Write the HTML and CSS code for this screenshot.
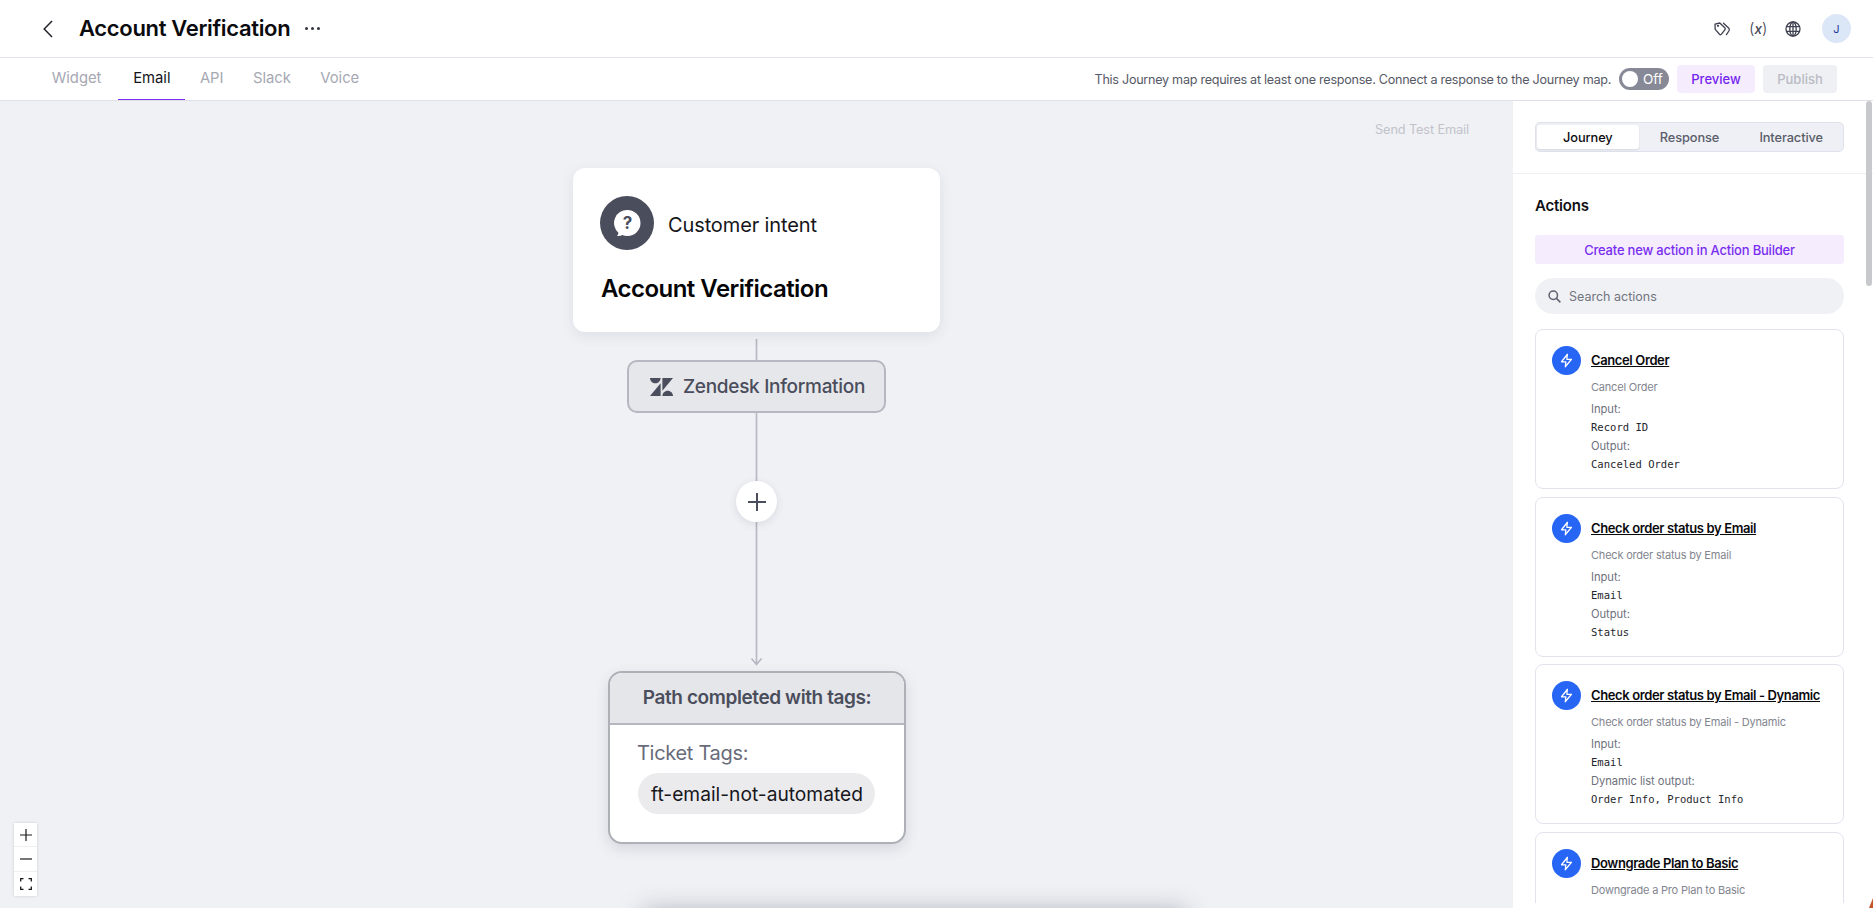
FILE: index.html
```html
<!DOCTYPE html>
<html lang="en">
<head>
<meta charset="utf-8">
<title>Account Verification</title>
<link rel="stylesheet" href="styles.css">
</head>
<body>
<div class="app">
  <header class="topbar">
    <button class="back" aria-label="Back"><svg width="10" height="18" viewBox="0 0 10 18"><path d="M9 1 1.2 9 9 17" fill="none" stroke="#22242c" stroke-width="1.5"/></svg></button>
    <h1 class="title">Account Verification</h1>
    <span class="dots"><i></i><i></i><i></i></span>
    <div class="top-icons">
      <svg class="tag-icon" width="17" height="14" viewBox="0 0 17 14" fill="none" stroke="#3f4250" stroke-width="1.3" stroke-linejoin="round" stroke-linecap="round"><path d="M1 2.200 5.800 1l5 4.800c.6.600.6 1.400 0 2l-3.300 4.400c-.6.700-1.400.7-2 .1L1.200 7.400Z"/><path d="M9.500 1.200 14.600 6c1 1 1 2 .3 3l-2.500 3.600"/><circle cx="4" cy="3.800" r=".5"/></svg>
      <span class="var-icon">(<em>x</em>)</span>
      <svg class="globe-icon" width="16" height="16" viewBox="0 0 16 16" fill="none" stroke="#3f4250" stroke-width="1.3"><circle cx="8" cy="8" r="7"/><ellipse cx="8" cy="8" rx="3.2" ry="7"/><path d="M1.400 5.600h13.200M1.400 10.400h13.200M8 1v14"/></svg>
      <span class="avatar">J</span>
    </div>
  </header>

  <nav class="tabbar">
    <div class="tabs">
      <a class="tab">Widget</a>
      <a class="tab active">Email</a>
      <a class="tab">API</a>
      <a class="tab">Slack</a>
      <a class="tab">Voice</a>
    </div>
    <div class="tab-actions">
      <span class="notice">This Journey map requires at least one response. Connect a response to the Journey map.</span>
      <span class="toggle"><i></i>Off</span>
      <button class="btn btn-preview">Preview</button>
      <button class="btn btn-publish">Publish</button>
    </div>
  </nav>

  <main class="workspace">
    <section class="canvas">
      <span class="send-test">Send Test Email</span>

      <svg class="edges" width="1513" height="807" viewBox="0 0 1513 807" fill="none" stroke="#b5b7c1" stroke-width="1.600">
        <path d="M756.500 238V259M756.500 312V563M751.500 557.500 756.500 563.500 761.500 557.500"/>
      </svg>

      <div class="node intent">
        <div class="intent-head">
          <span class="intent-icon">
            <svg width="30" height="30" viewBox="0 0 30 30"><path d="M15.500 2a13 13 0 0 1 0 26c-1.900 0-3.700-.4-5.300-1-1.300.8-3.500 1.300-5.400 1 1-.8 1.600-2 1.600-3.300A13 13 0 0 1 15.500 2Z" fill="#fff"/><text x="15.500" y="21" text-anchor="middle" class="q">?</text></svg>
          </span>
          <span class="intent-label">Customer intent</span>
        </div>
        <div class="intent-name">Account Verification</div>
      </div>

      <div class="node zendesk">
        <svg width="23" height="18" viewBox="0 0 23 18" fill="#4a4d5c"><path d="M0 0h10.600c0 2.900-2.400 5.300-5.300 5.300S0 2.900 0 0Z"/><path d="M12.400 0H23L12.400 12.700Z"/><path d="M10.600 5.300V18H0Z"/><path d="M12.400 18c0-2.900 2.400-5.300 5.300-5.300S23 15.100 23 18Z"/></svg>
        <span>Zendesk Information</span>
      </div>

      <button class="node add" aria-label="Add"><svg width="18" height="18" viewBox="0 0 18 18"><path d="M9 0v18M0 9h18" stroke="#4a4d5c" stroke-width="2"/></svg></button>

      <div class="node path">
        <div class="path-head">Path completed with tags:</div>
        <div class="path-body">
          <div class="path-label">Ticket Tags:</div>
          <span class="pill">ft-email-not-automated</span>
        </div>
      </div>

      <div class="node offscreen"></div>

      <div class="zoom-ctl">
        <button aria-label="Zoom in"><svg width="12" height="12" viewBox="0 0 12 12"><path d="M6 0v12M0 6h12" stroke="#1a1a1a" stroke-width="1.200"/></svg></button>
        <button aria-label="Zoom out"><svg width="12" height="12" viewBox="0 0 12 12"><path d="M0 6h12" stroke="#1a1a1a" stroke-width="1.200"/></svg></button>
        <button aria-label="Fit"><svg width="12" height="12" viewBox="0 0 12 12" fill="none"><path d="M.7 3.500V.7h2.800M8.500.7h2.800v2.800M11.300 8.500v2.800H8.500M3.500 11.300H.7V8.500" stroke="#1a1a1a" stroke-width="1.300"/></svg></button>
      </div>
    </section>

    <aside class="sidebar">
      <div class="side-tabs-wrap">
        <div class="side-tabs">
          <span class="side-tab active">Journey</span>
          <span class="side-tab">Response</span>
          <span class="side-tab">Interactive</span>
        </div>
      </div>
      <div class="side-body">
        <h2 class="side-title">Actions</h2>
        <button class="create">Create new action in Action Builder</button>
        <div class="search">
          <svg width="13" height="13" viewBox="0 0 13 13" fill="none" stroke="#5d606e" stroke-width="1.500"><circle cx="5.300" cy="5.300" r="4.200"/><path d="m8.400 8.400 4 4"/></svg>
          <span>Search actions</span>
        </div>

        <article class="action">
          <span class="bolt"><svg width="15" height="15" viewBox="0 0 24 24" fill="none" stroke="#fff" stroke-width="2" stroke-linejoin="round"><path d="M13.500 2 4 14h7l-1 8 10-12h-7.500Z"/></svg></span>
          <div class="action-main">
            <a class="action-title">Cancel Order</a>
            <p class="action-desc">Cancel Order</p>
            <p class="action-key">Input:</p>
            <code class="action-val">Record ID</code>
            <p class="action-key">Output:</p>
            <code class="action-val">Canceled Order</code>
          </div>
        </article>

        <article class="action">
          <span class="bolt"><svg width="15" height="15" viewBox="0 0 24 24" fill="none" stroke="#fff" stroke-width="2" stroke-linejoin="round"><path d="M13.500 2 4 14h7l-1 8 10-12h-7.500Z"/></svg></span>
          <div class="action-main">
            <a class="action-title">Check order status by Email</a>
            <p class="action-desc">Check order status by Email</p>
            <p class="action-key">Input:</p>
            <code class="action-val">Email</code>
            <p class="action-key">Output:</p>
            <code class="action-val">Status</code>
          </div>
        </article>

        <article class="action">
          <span class="bolt"><svg width="15" height="15" viewBox="0 0 24 24" fill="none" stroke="#fff" stroke-width="2" stroke-linejoin="round"><path d="M13.500 2 4 14h7l-1 8 10-12h-7.500Z"/></svg></span>
          <div class="action-main">
            <a class="action-title">Check order status by Email - Dynamic</a>
            <p class="action-desc">Check order status by Email - Dynamic</p>
            <p class="action-key">Input:</p>
            <code class="action-val">Email</code>
            <p class="action-key">Dynamic list output:</p>
            <code class="action-val">Order Info, Product Info</code>
          </div>
        </article>

        <article class="action">
          <span class="bolt"><svg width="15" height="15" viewBox="0 0 24 24" fill="none" stroke="#fff" stroke-width="2" stroke-linejoin="round"><path d="M13.500 2 4 14h7l-1 8 10-12h-7.500Z"/></svg></span>
          <div class="action-main">
            <a class="action-title">Downgrade Plan to Basic</a>
            <p class="action-desc">Downgrade a Pro Plan to Basic</p>
          </div>
        </article>
      </div>
      <span class="scroll-thumb"></span>
      <span class="corner-mark"></span>
    </aside>
  </main>
</div>
</body>
</html>
```

FILE: styles.css
```css
* { box-sizing: border-box; }
html, body { margin: 0; height: 100%; overflow: hidden; }
body { font-family: "Inter", "Noto Sans", sans-serif; color: #111; background: #fff; }
button { font: inherit; border: 0; padding: 0; background: none; }
h1, h2, p { margin: 0; }

.app { display: flex; flex-direction: column; width: 1873px; height: 908px; }

.topbar { flex: none; height: 58px; display: flex; align-items: center; padding: 0 22px 0 43px; border-bottom: 1px solid #e2e2ea; }
.back { width: 10px; height: 18px; display: flex; margin-right: 26px; }
.title { font-size: 22px; font-weight: 600; letter-spacing: -0.33px; color: #0b0b0f; padding-bottom: 2px; }
.dots { display: flex; gap: 3px; margin-left: 15px; }
.dots i { width: 3px; height: 3px; border-radius: 50%; background: #33353f; }
.top-icons { margin-left: auto; display: flex; align-items: center; }
.var-icon { font-size: 15.500px; font-weight: 300; color: #3f4250; width: 18px; margin-left: 18px; text-align: center; white-space: nowrap; }
.var-icon em { font-weight: 500; font-size: 13.500px; }
.globe-icon { margin-left: 18px; }
.avatar { width: 29px; height: 29px; margin-left: 21px; border-radius: 50%; background: #dbe6f6; color: #1e3a9a; font-size: 11px; display: flex; align-items: center; justify-content: center; }

.tabbar { flex: none; height: 43px; display: flex; align-items: stretch; justify-content: space-between; padding: 0 36px 0 37px; border-bottom: 1px solid #dfe0ea; }
.tabs { display: flex; }
.tab { display: flex; align-items: center; padding: 0 14.700px 2px; font-size: 14.800px; color: #a6a8b3; height: 42px; border-bottom: 1.500px solid transparent; }
.tab:first-child { padding-right: 17px; }
.tab.active { color: #14141a; border-bottom-color: #7c2cf5; }
.tab-actions { display: flex; align-items: center; }
.notice { font-size: 12.600px; color: #565966; letter-spacing: -0.27px; margin-right: 8px; }
.toggle { width: 50px; height: 22px; border-radius: 11px; background: #878996; color: #fff; font-size: 13.500px; display: flex; align-items: center; gap: 5px; padding-left: 3px; }
.toggle i { width: 16px; height: 16px; border-radius: 50%; background: #fff; }
.btn { height: 28px; border-radius: 4px; font-size: 13px; font-weight: 500; }
.btn-preview { width: 78px; margin-left: 8px; background: #f5edfe; color: #7424ee; }
.btn-publish { width: 74px; margin-left: 8px; background: #eff0f3; color: #b9bbc4; }

.workspace { flex: 1; display: flex; min-height: 0; }
.canvas { position: relative; flex: 1; background: #f0f1f5; overflow: hidden; }
.edges { position: absolute; left: 0; top: 0; }
.send-test { position: absolute; top: 21px; right: 44px; font-size: 12.800px; color: #c2c3ca; letter-spacing: -0.15px; }
.node { position: absolute; }

.intent { left: 573px; top: 67px; width: 367px; height: 164px; background: #fff; border-radius: 12px; box-shadow: 0 4px 14px rgba(50, 55, 80, .09); padding: 28px 27px 0; }
.intent-head { display: flex; align-items: center; gap: 14px; }
.intent-icon { width: 54px; height: 54px; border-radius: 50%; background: #4a4d5c; display: flex; align-items: center; justify-content: center; }
.q { font-size: 17px; font-weight: 700; fill: #4a4d5c; }
.intent-label { font-size: 20px; color: #15151a; letter-spacing: -0.12px; padding-top: 3px; }
.intent-name { margin-top: 24px; margin-left: 1px; font-size: 24px; font-weight: 600; letter-spacing: -0.53px; line-height: 29px; color: #050507; }

.zendesk { left: 627px; top: 259px; width: 259px; height: 53px; border: 2px solid #b5b7c1; border-radius: 10px; background: #e6e7ea; display: flex; align-items: center; gap: 10px; padding-left: 21px; font-size: 19px; font-weight: 500; color: #4a4d5c; letter-spacing: -0.3px; }

.add { left: 736px; top: 380px; width: 41px; height: 41px; border-radius: 50%; background: #fff; box-shadow: 0 2px 8px rgba(50, 55, 80, .12); display: flex; align-items: center; justify-content: center; }

.path { left: 608px; top: 570px; width: 298px; height: 173px; border: 2px solid #aeb0b8; border-radius: 14px; background: #fff; box-shadow: 0 5px 14px rgba(50, 55, 80, .14); overflow: hidden; }
.path-head { height: 52px; padding-bottom: 1px; background: #e5e6e9; border-bottom: 2px solid #b5b7c1; display: flex; align-items: center; justify-content: center; font-size: 19px; font-weight: 600; color: #4a4d5c; letter-spacing: -0.4px; }
.path-body { padding: 15px 27px 0; }
.path-label { font-size: 20px; color: #686b79; letter-spacing: -0.3px; line-height: 26px; }
.pill { display: inline-flex; align-items: center; margin-top: 7px; margin-left: 1px; width: 237px; height: 41px; padding-left: 13px; border-radius: 21px; background: #ebebed; font-size: 19.200px; color: #17171c; white-space: nowrap; }

.offscreen { left: 650px; top: 815px; width: 530px; height: 60px; background: #8a8b94; box-shadow: 0 0 24px 6px rgba(60, 62, 80, .34); }

.zoom-ctl { position: absolute; left: 14px; bottom: 12px; width: 23px; display: flex; flex-direction: column; background: #fff; box-shadow: 0 0 3px rgba(0, 0, 0, .14); }
.zoom-ctl button { height: 24.300px; display: flex; align-items: center; justify-content: center; border-bottom: 1px solid #eeeff2; }
.zoom-ctl button:last-child { border-bottom: 0; }

.sidebar { position: relative; flex: none; width: 360px; background: #fff; overflow: hidden; display: flex; flex-direction: column; padding-bottom: 5px; }
.side-tabs-wrap { flex: none; height: 73px; padding: 21px 29px 0 22px; border-bottom: 1px solid #f0f0f4; }
.side-tabs { display: flex; height: 30px; padding: 2px 1px; border: 1px solid #dfe1ec; border-radius: 5px; background: #eff0f5; }
.side-tab { flex: 1; display: flex; align-items: center; justify-content: center; font-size: 12.800px; font-weight: 500; color: #5a5d6a; letter-spacing: -0.1px; border-radius: 3px; }
.side-tab.active { background: #fff; color: #0c0c10; box-shadow: 0 1px 2px rgba(40, 40, 70, .12); }
.side-body { flex: 1; min-height: 0; overflow: hidden; padding: 23px 29px 0 22px; display: flex; flex-direction: column; }
.side-title { font-size: 15px; font-weight: 600; letter-spacing: -0.2px; line-height: 18px; color: #101015; }
.create { flex: none; margin-top: 20px; height: 29px; border-radius: 3px; background: #f5edfe; color: #7a2df0; font-size: 13px; font-weight: 500; letter-spacing: -0.2px; }
.search { flex: none; margin-top: 14px; height: 36px; border-radius: 18px; background: #f0f1f5; display: flex; align-items: center; gap: 8px; padding-left: 13px; font-size: 12.500px; color: #72747f; }
.action { margin-top: 7.500px; min-height: 160px; flex: none; display: flex; gap: 10px; padding: 16px 17px 0 16px; border: 1px solid #e3e3ef; border-radius: 8px; }
.search + .action { margin-top: 15px; }
.bolt { flex: none; width: 29px; height: 29px; border-radius: 50%; background: #2766f5; display: flex; align-items: center; justify-content: center; }
.action-main { min-width: 0; display: flex; flex-direction: column; align-items: flex-start; }
.action-title { margin-top: 5px; font-size: 13px; font-weight: 600; letter-spacing: -0.38px; line-height: 18px; color: #0a0a0e; text-decoration: underline; white-space: nowrap; }
.action-desc { margin-top: 11px; font-size: 11px; line-height: 15px; color: #83858f; letter-spacing: -0.2px; white-space: nowrap; }
.action-key { margin-top: 7px; font-size: 11.200px; line-height: 14px; color: #6e707c; white-space: nowrap; letter-spacing: -0.05px; }
.action-val { margin-top: 4px; font-family: "DejaVu Sans Mono", monospace; font-size: 10.560px; line-height: 14px; color: #26262c; white-space: nowrap; }
.action-val + .action-key { margin-top: 5px; }
.scroll-thumb { position: absolute; right: 1px; top: 0; width: 6px; height: 185px; border-radius: 3px; background: #c8c9cd; }
.corner-mark { position: absolute; right: 0; bottom: 0; width: 4px; height: 10px; background: #c4552a; clip-path: polygon(100% 0, 100% 100%, 0 100%); }
```
